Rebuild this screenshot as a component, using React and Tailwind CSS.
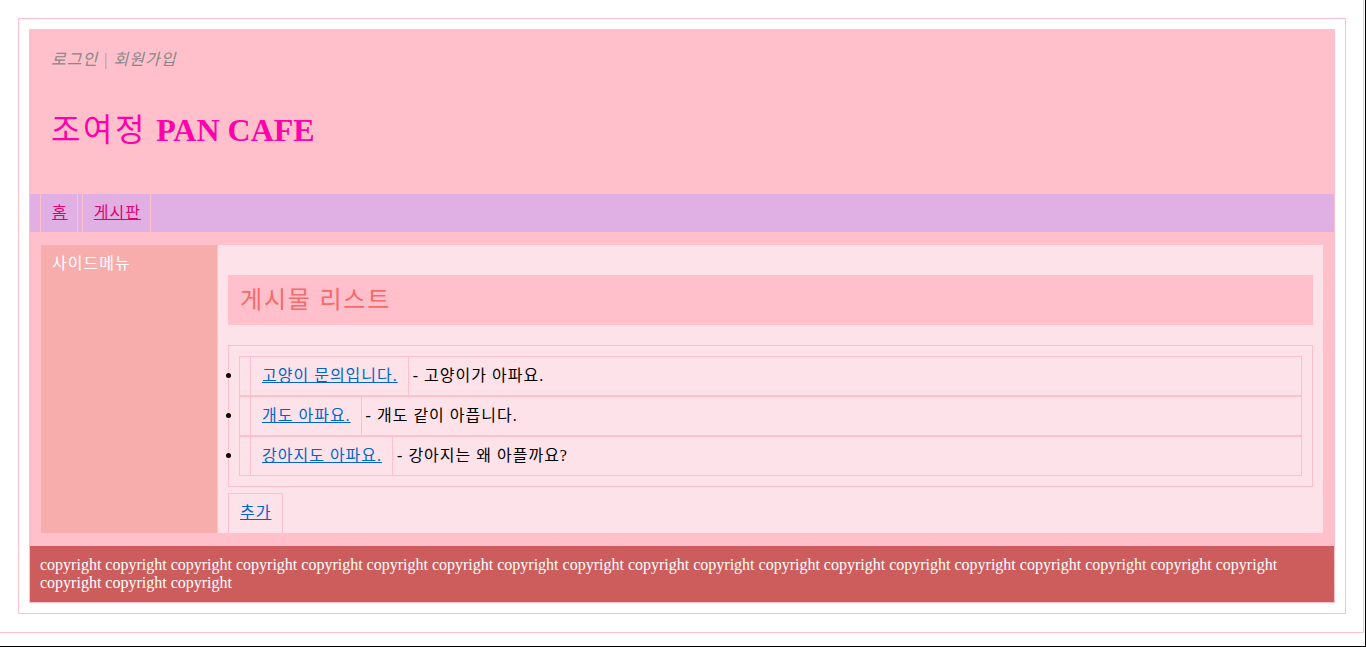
const posts = [
  { title: "고양이 문의입니다.", desc: "- 고양이가 아파요." },
  { title: "개도 아파요.", desc: "- 개도 같이 아픕니다." },
  { title: "강아지도 아파요.", desc: "- 강아지는 왜 아플까요?" },
];

const copyright = Array(22).fill("copyright").join(" ");

export default function App() {
  return (
    <div className="w-[1366px] h-[647px] overflow-hidden bg-white border-r border-b border-black font-['Liberation_Serif','Noto_Sans_CJK_KR',serif] text-[16px] leading-[18px] text-black tracking-[1px]">
      <div className="w-[1364px] h-[633px] border-r border-b border-[#ffc0cb] pt-[18px] pl-[18px]">
        <div className="w-[1328px] h-[596px] border border-[#ffc0cb] p-[10px] flex flex-col">
          {/* header */}
          <header className="h-[164px] bg-[#ffc0cb] pl-[22px] pt-[22px]">
            <div className="italic text-[#888888]">
              로그인 <span className="text-[#b09090]">|</span> 회원가입
            </div>
            <h1 className="mt-[43px] text-[32px] leading-[37px] text-[#ff00aa]">
              <span className="font-normal tracking-[2.6px]">조여정</span>{" "}
              <span className="font-bold tracking-normal">PAN CAFE</span>
            </h1>
          </header>

          {/* nav */}
          <nav className="h-[40px] bg-[#e0b0e4] border border-[#ffc0cb]">
            <ul className="flex h-full pl-[10px]">
              <li className="flex items-center pl-[11px] pr-[9px] border-x border-[#ffc0cb]">
                <a href="#" className="underline text-[#e6006e]">홈</a>
              </li>
              <li className="flex items-center pl-[11px] pr-[9px] ml-[4px] border-x border-[#ffc0cb]">
                <a href="#" className="underline text-[#e6006e]">게시판</a>
              </li>
            </ul>
          </nav>

          {/* body */}
          <div className="h-[312px] bg-[#ffc0cb] p-[12px] flex gap-[1px]">
            <aside className="w-[176px] bg-[#f8adad] pt-[10px] pl-[11px] text-white">사이드메뉴</aside>
            <main className="flex-1 bg-[#fde2ea] pt-[10px] px-[10px]">
              <h2 className="mt-[20px] h-[50px] bg-[#ffc0cb] pl-[12px] flex items-center text-[24px] leading-[30px] tracking-[1.8px] text-[#f66a6a] font-normal">
                게시물 리스트
              </h2>
              <ul className="mt-[20px] h-[142px] border border-[#ffc0cb] p-[10px]">
                {posts.map((p) => (
                  <li key={p.title} className="relative h-[40px] border border-[#ffc0cb] pl-[10px]">
                    <span className="absolute left-[-14px] top-[16px] w-[5px] h-[5px] rounded-full bg-black" />
                    <a href="#" className="inline-block py-[10px] pl-[11px] pr-[10px] border-x border-[#ffc0cb] underline text-[#0066cc]">
                      {p.title}
                    </a>
                    <span className="ml-[4px]">{p.desc}</span>
                  </li>
                ))}
              </ul>
              <a href="#" className="inline-block mt-[6px] h-[40px] px-[11px] py-[10px] border border-b-0 border-[#ffc0cb] underline text-[#0066cc]">
                추가
              </a>
            </main>
          </div>

          {/* footer */}
          <footer className="h-[58px] bg-[#cd5c5c] border border-[#ffc0cb] px-[10px] pt-[10px] text-white tracking-normal">
            {copyright}
          </footer>
        </div>
      </div>
    </div>
  );
}
